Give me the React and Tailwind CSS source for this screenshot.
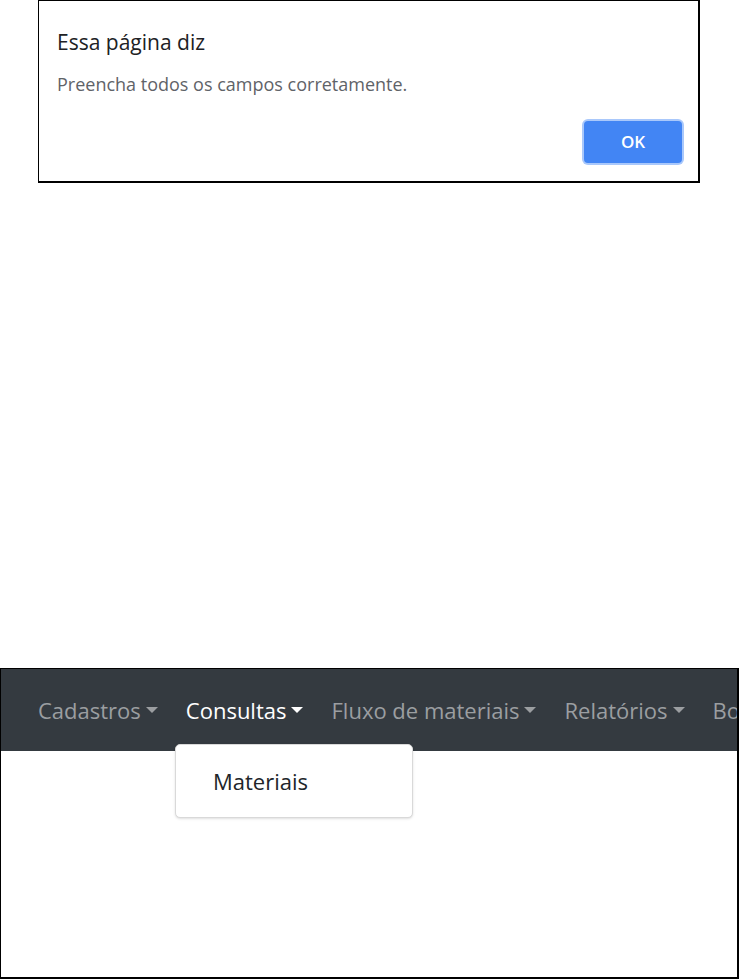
const navItems = [
  { label: 'Cadastros', active: false },
  { label: 'Consultas', active: true },
  { label: 'Fluxo de materiais', active: false },
  { label: 'Relatórios', active: false },
  { label: 'Bolsas', active: false },
];

function Caret() {
  return (
    <span className="ml-[5px] inline-block h-0 w-0 border-x-[6px] border-t-[6px] border-x-transparent border-t-current align-middle" />
  );
}

function AlertDialog() {
  return (
    <div className="ml-[38px] flex h-[183px] w-[662px] flex-col border border-black border-b-2 border-r-2 bg-white">
      <div className="px-[18px] pt-[28px] text-[21px] leading-[26px] text-[#202124]">Essa página diz</div>
      <div className="px-[18px] pt-[18px] text-[18px] leading-[22px] text-[#5f6368]">
        Preencha todos os campos corretamente.
      </div>
      <div className="mt-auto flex justify-end px-[16px] pb-[18px]">
        <button className="h-[42px] w-[98px] rounded-[4px] bg-[#4285f4] text-[17px] font-semibold text-white ring-2 ring-[#a9c8fb]">
          OK
        </button>
      </div>
    </div>
  );
}

function NavPanel() {
  return (
    <div className="flex h-[311px] w-[739px] flex-col overflow-hidden border border-black border-b-2 border-r-2 bg-white">
      <nav className="flex h-[82px] shrink-0 items-center overflow-hidden bg-[#343a40] pl-[37px] text-[22px]">
        {navItems.map((item) => (
          <div key={item.label} className="relative mr-[28px] shrink-0">
            <span
              className={
                'flex items-center whitespace-nowrap ' +
                (item.active ? 'text-white' : 'text-[#9b9ea1]')
              }
            >
              {item.label}
              {item.label !== 'Bolsas' && <Caret />}
            </span>
          </div>
        ))}
      </nav>
      <div className="relative flex-1">
        <div className="absolute left-[174px] top-[-7px] z-10 w-[238px] rounded-[5px] border border-[#d9d9d9] bg-white py-[10px] shadow-sm">
          <div className="px-[37px] py-[9px] text-[22px] leading-[34px] text-[#212529]">Materiais</div>
        </div>
      </div>
    </div>
  );
}

export default function App() {
  return (
    <div className="flex h-[979px] w-[739px] flex-col bg-white font-['Open_Sans',sans-serif]">
      <AlertDialog />
      <div className="flex-1" />
      <NavPanel />
    </div>
  );
}
